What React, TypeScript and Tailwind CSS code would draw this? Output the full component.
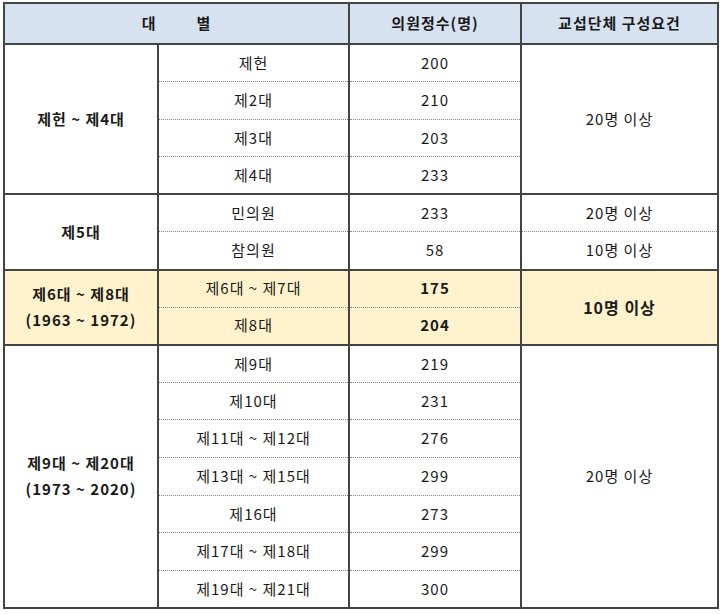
import React from "react";

type Sub = { name: string; seats: string; req?: string };
type Group = {
  label: string[];
  subs: Sub[];
  req?: string;
  highlight?: boolean;
};

const groups: Group[] = [
  {
    label: ["제헌 ~ 제4대"],
    subs: [
      { name: "제헌", seats: "200" },
      { name: "제2대", seats: "210" },
      { name: "제3대", seats: "203" },
      { name: "제4대", seats: "233" },
    ],
    req: "20명 이상",
  },
  {
    label: ["제5대"],
    subs: [
      { name: "민의원", seats: "233", req: "20명 이상" },
      { name: "참의원", seats: "58", req: "10명 이상" },
    ],
  },
  {
    label: ["제6대 ~ 제8대", "(1963 ~ 1972)"],
    subs: [
      { name: "제6대 ~ 제7대", seats: "175" },
      { name: "제8대", seats: "204" },
    ],
    req: "10명 이상",
    highlight: true,
  },
  {
    label: ["제9대 ~ 제20대", "(1973 ~ 2020)"],
    subs: [
      { name: "제9대", seats: "219" },
      { name: "제10대", seats: "231" },
      { name: "제11대 ~ 제12대", seats: "276" },
      { name: "제13대 ~ 제15대", seats: "299" },
      { name: "제16대", seats: "273" },
      { name: "제17대 ~ 제18대", seats: "299" },
      { name: "제19대 ~ 제21대", seats: "300" },
    ],
    req: "20명 이상",
  },
];

const solid = "border-2 border-[#444444]";

export default function App() {
  return (
    <div className="bg-white w-[720px] h-[614px] pt-[2px] pl-[3px]" style={{ fontFamily: '"Noto Sans CJK KR", "Noto Sans", sans-serif' }}>
      <table className="border-collapse table-fixed w-[714px] text-[15px] text-[#1a1a1a] text-center tracking-[1px]">
        <colgroup>
          <col className="w-[154px]" />
          <col className="w-[191px]" />
          <col className="w-[172px]" />
          <col className="w-[197px]" />
        </colgroup>
        <thead>
          <tr className="h-[41px] bg-[#d7e2f1]">
            <th colSpan={2} className={`${solid} font-bold`}>
              <span>대</span>
              <span className="inline-block w-[40px]" />
              <span>별</span>
            </th>
            <th className={`${solid} font-bold`}>의원정수(명)</th>
            <th className={`${solid} font-bold`}>교섭단체 구성요건</th>
          </tr>
        </thead>
        <tbody>
          {groups.map((g, gi) =>
            g.subs.map((s, si) => {
              const last = si === g.subs.length - 1;
              const cell = last
                ? "border-x-2 border-x-[#444444] border-b-2 border-b-[#444444]"
                : "border-x-2 border-x-[#444444] border-b border-b-[#8a8a8a] [border-bottom-style:dotted]";
              const bg = g.highlight ? "bg-[#fff2cc]" : "bg-white";
              return (
                <tr key={`${gi}-${si}`} className={`h-[37.6px] ${bg}`}>
                  {si === 0 && (
                    <td rowSpan={g.subs.length} className={`${solid} font-bold leading-[26px]`}>
                      {g.label.map((l) => (
                        <div key={l}>{l}</div>
                      ))}
                    </td>
                  )}
                  <td className={cell}>{s.name}</td>
                  <td className={`${cell} ${g.highlight ? "font-bold" : ""}`}>{s.seats}</td>
                  {s.req !== undefined && <td className={cell}>{s.req}</td>}
                  {si === 0 && g.req !== undefined && (
                    <td rowSpan={g.subs.length} className={`${solid} ${g.highlight ? "font-bold text-[16px]" : ""}`}>
                      {g.req}
                    </td>
                  )}
                </tr>
              );
            })
          )}
        </tbody>
      </table>
    </div>
  );
}
